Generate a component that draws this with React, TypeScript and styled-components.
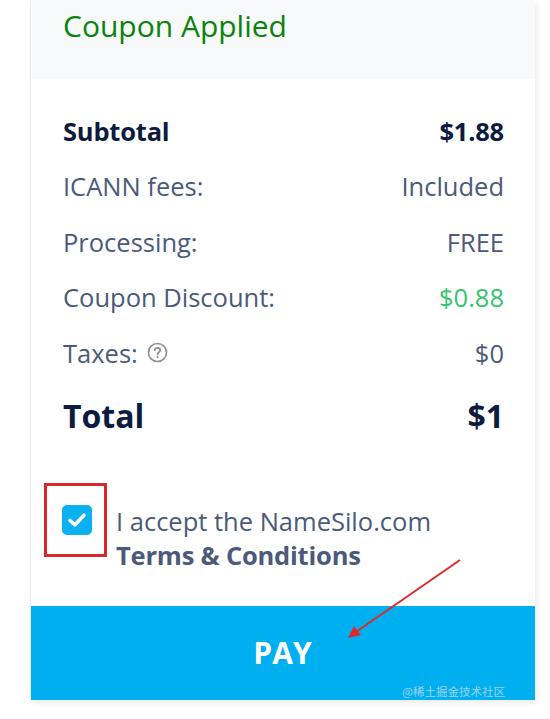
import React from "react"
import styled, { createGlobalStyle } from "styled-components"

const GlobalStyle = createGlobalStyle`
  html, body {
    margin: 0;
    padding: 0;
    background: #fff;
    font-family: "Open Sans", "Noto Sans", sans-serif;
  }
`

interface Line {
  label: string
  value: string
  tone?: "green"
  help?: boolean
}

const lines: Line[] = [
  { label: "ICANN fees:", value: "Included" },
  { label: "Processing:", value: "FREE" },
  { label: "Coupon Discount:", value: "$0.88", tone: "green" },
  { label: "Taxes:", value: "$0", help: true },
]

export default function App() {
  return (
    <Page>
      <GlobalStyle />
      <Card>
        <Header>Coupon Applied</Header>
        <Summary>
          <Row $strong>
            <span>Subtotal</span>
            <span>$1.88</span>
          </Row>
          {lines.map((l) => (
            <Row key={l.label}>
              <Label>
                {l.label}
                {l.help && <HelpIcon />}
              </Label>
              <Value $tone={l.tone}>{l.value}</Value>
            </Row>
          ))}
          <TotalRow>
            <span>Total</span>
            <span>$1</span>
          </TotalRow>
        </Summary>
        <Terms>
          <Highlight>
            <CheckBox>
              <svg width="20" height="16" viewBox="0 0 20 16">
                <path
                  d="M3 8.5 L8 12.8 L17 3.2"
                  fill="none"
                  stroke="#fff"
                  strokeWidth="3.6"
                  strokeLinecap="round"
                  strokeLinejoin="round"
                />
              </svg>
            </CheckBox>
          </Highlight>
          <TermsText>
            I accept the NameSilo.com
            <br />
            <b>Terms &amp; Conditions</b>
          </TermsText>
        </Terms>
        <PayButton>
          PAY
          <Watermark>@稀土掘金技术社区</Watermark>
        </PayButton>
        <Arrow width="130" height="100" viewBox="0 0 130 100">
          <line x1="121" y1="6" x2="14" y2="80" stroke="#dd2a2a" strokeWidth="2" />
          <polygon points="9,84 15,72 22,81" fill="#dd2a2a" />
        </Arrow>
      </Card>
    </Page>
  )
}

const HelpIcon = () => (
  <svg width="21" height="21" viewBox="0 0 20 20" style={{ marginLeft: 9 }}>
    <circle cx="10" cy="10" r="8.6" fill="none" stroke="#8a8f99" strokeWidth="1.6" />
    <path
      d="M7.4 7.8 C7.4 5 12.6 5 12.6 7.8 C12.6 9.8 10 9.6 10 11.8"
      fill="none"
      stroke="#8a8f99"
      strokeWidth="1.7"
      strokeLinecap="round"
    />
    <circle cx="10" cy="14.4" r="1.1" fill="#8a8f99" />
  </svg>
)

const Page = styled.div`
  width: 550px;
  height: 719px;
  overflow: hidden;
`

const Card = styled.div`
  position: relative;
  margin-left: 30px;
  width: 505px;
  border-left: 1px solid #e6e8eb;
  box-sizing: border-box;
  background: #fff;
  box-shadow: 2px 3px 6px rgba(0, 0, 0, 0.08);
`

const Header = styled.div`
  height: 79px;
  background: #f7f9fb;
  padding: 5px 0 0 32px;
  box-sizing: border-box;
  color: #0b830b;
  font-size: 30px;
  line-height: 42px;
`

const Summary = styled.div`
  padding: 24px 31px 0 32px;
`

const Row = styled.div<{ $strong?: boolean }>`
  height: 55.5px;
  display: flex;
  align-items: center;
  justify-content: space-between;
  font-size: 25.5px;
  color: ${(p) => (p.$strong ? "#0d1b3e" : "#4b5a7a")};
  font-weight: ${(p) => (p.$strong ? 700 : 400)};
  letter-spacing: ${(p) => (p.$strong ? "-0.2px" : "0")};
`

const Label = styled.span`
  display: flex;
  align-items: center;
`

const Value = styled.span<{ $tone?: "green" }>`
  color: ${(p) => (p.$tone === "green" ? "#33c46e" : "inherit")};
`

const TotalRow = styled.div`
  height: 70px;
  display: flex;
  align-items: center;
  justify-content: space-between;
  font-size: 32px;
  font-weight: 700;
  color: #0d1b3e;
`

const Terms = styled.div`
  display: flex;
  align-items: flex-start;
  padding: 32px 0 0 13px;
  height: 155px;
  box-sizing: border-box;
`

const Highlight = styled.div`
  border: 3px solid #d7262c;
  width: 63px;
  height: 74px;
  box-sizing: border-box;
  padding: 19px 0 0 15px;
`

const CheckBox = styled.div`
  width: 30px;
  height: 30px;
  border-radius: 5px;
  background: #0bb0f0;
  display: flex;
  align-items: center;
  justify-content: center;
`

const TermsText = styled.div`
  margin: 21px 0 0 9px;
  font-size: 25.5px;
  line-height: 34px;
  color: #4b5a7a;

  b {
    font-weight: 700;
    letter-spacing: -0.2px;
  }
`

const PayButton = styled.div`
  position: relative;
  height: 94px;
  background: #00aff0;
  color: #fff;
  display: flex;
  align-items: center;
  justify-content: center;
  font-size: 30px;
  font-weight: 700;
  padding-right: 1px;
`

const Watermark = styled.span`
  position: absolute;
  right: 30px;
  bottom: 1px;
  font-family: "Noto Sans CJK SC", sans-serif;
  font-size: 11.5px;
  font-weight: 400;
  color: rgba(205, 220, 230, 0.8);
`

const Arrow = styled.svg`
  position: absolute;
  left: 308px;
  top: 554px;
`
